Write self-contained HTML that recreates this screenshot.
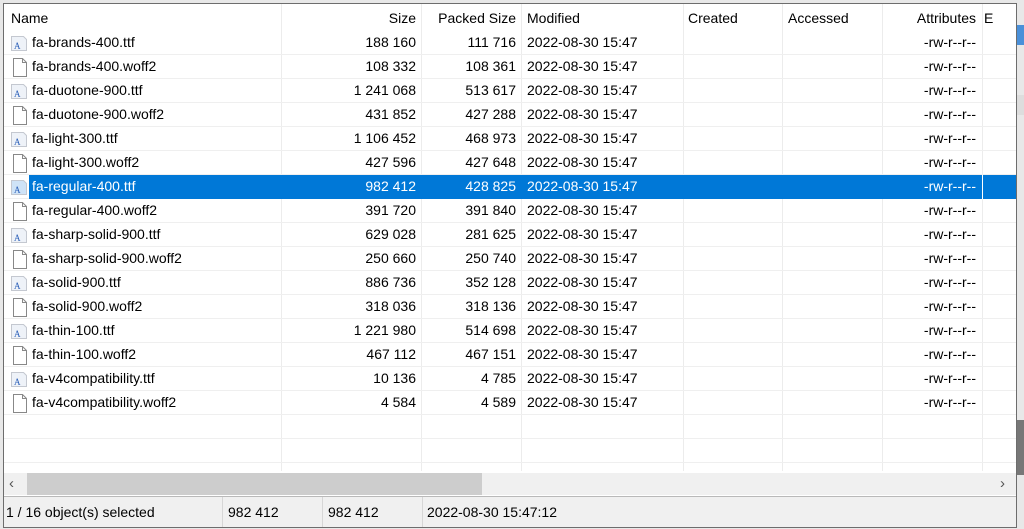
<!DOCTYPE html><html><head><style>
*{margin:0;padding:0;box-sizing:border-box}
body{width:1024px;height:529px;overflow:hidden;background:#e8e8e8;font-family:"Liberation Sans",sans-serif;font-size:14px;color:#000;position:relative}
.win{position:absolute;left:3px;top:3px;width:1014px;height:525px;background:#fff;border:1px solid #6d6d6d}
.a{position:absolute;white-space:nowrap}
.hdr{position:absolute;left:0;top:0;width:1012px;height:27px;background:#fff}
.vl{position:absolute;width:1px;background:#ececec}
.row{position:absolute;left:0;width:1012px;height:24px;border-bottom:1px solid #efefef}
.c{position:absolute;top:3px;white-space:nowrap}
.r{text-align:right}
.sel{background:#0078d7;color:#fff}
</style></head><body>
<div style="position:absolute;left:1017px;top:25px;width:7px;height:20px;background:#4a90d9"></div>
<div style="position:absolute;left:1017px;top:95px;width:7px;height:20px;background:#ddd"></div>
<div style="position:absolute;left:1017px;top:420px;width:7px;height:55px;background:#777"></div>
<div class="win">
<div class="hdr">
<div class="a" style="left:7px;top:6px">Name</div>
<div class="a" style="left:278px;top:6px;width:134px;text-align:right">Size</div>
<div class="a" style="left:418px;top:6px;width:94px;text-align:right">Packed Size</div>
<div class="a" style="left:523px;top:6px">Modified</div>
<div class="a" style="left:684px;top:6px">Created</div>
<div class="a" style="left:784px;top:6px">Accessed</div>
<div class="a" style="left:880px;top:6px;width:92px;text-align:right">Attributes</div>
<div class="a" style="left:980px;top:6px">E</div>
</div>
<div class="vl" style="left:277px;top:0;height:467px"></div>
<div class="vl" style="left:417px;top:0;height:467px"></div>
<div class="vl" style="left:517px;top:0;height:467px"></div>
<div class="vl" style="left:679px;top:0;height:467px"></div>
<div class="vl" style="left:778px;top:0;height:467px"></div>
<div class="vl" style="left:878px;top:0;height:467px"></div>
<div class="vl" style="left:978px;top:0;height:467px"></div>
<div id="rows"></div>
<div style="position:absolute;left:0;top:469px;width:1012px;height:22px;background:#f0f0f0"></div>
<div style="position:absolute;left:23px;top:469px;width:455px;height:22px;background:#cdcdcd"></div>
<div class="a" style="left:5px;top:471px;color:#555;font-size:15px">&lsaquo;</div>
<div class="a" style="left:996px;top:471px;color:#555;font-size:15px">&rsaquo;</div>
<div style="position:absolute;left:0;top:492px;width:1012px;height:31px;background:#f0f0f0;border-top:1px solid #b9b9b9"></div>
<div class="vl" style="left:218px;top:493px;height:30px;background:#d6d6d6"></div>
<div class="vl" style="left:318px;top:493px;height:30px;background:#d6d6d6"></div>
<div class="vl" style="left:418px;top:493px;height:30px;background:#d6d6d6"></div>
<div class="a" style="left:2px;top:500px">1 / 16 object(s) selected</div>
<div class="a" style="left:224px;top:500px">982 412</div>
<div class="a" style="left:324px;top:500px">982 412</div>
<div class="a" style="left:423px;top:500px">2022-08-30 15:47:12</div>
</div>
<script>
var d=[["fa-brands-400.ttf","188 160","111 716"],["fa-brands-400.woff2","108 332","108 361"],["fa-duotone-900.ttf","1 241 068","513 617"],["fa-duotone-900.woff2","431 852","427 288"],["fa-light-300.ttf","1 106 452","468 973"],["fa-light-300.woff2","427 596","427 648"],["fa-regular-400.ttf","982 412","428 825"],["fa-regular-400.woff2","391 720","391 840"],["fa-sharp-solid-900.ttf","629 028","281 625"],["fa-sharp-solid-900.woff2","250 660","250 740"],["fa-solid-900.ttf","886 736","352 128"],["fa-solid-900.woff2","318 036","318 136"],["fa-thin-100.ttf","1 221 980","514 698"],["fa-thin-100.woff2","467 112","467 151"],["fa-v4compatibility.ttf","10 136","4 785"],["fa-v4compatibility.woff2","4 584","4 589"]];
var h="";
for(var i=0;i<18;i++){var t=27+i*24;
if(i>=16){h+='<div class="row" style="top:'+t+'px"></div>';continue;}
var r=d[i],s=i==6,ttf=r[0].slice(-3)=="ttf";
var ic=ttf?'<svg width="18" height="17" style="position:absolute;left:6px;top:4px"><path d="M1.5 1.5h12l3 3v11h-15z" fill="'+(s?'#cfe3f7':'#eef2f8')+'" stroke="#c4c8d0"/><text x="4" y="14" font-size="9" fill="#2b5fb8" font-family="Liberation Serif">A</text></svg>'
:'<svg width="16" height="19" style="position:absolute;left:8px;top:3px"><path d="M1.5 .5h9l4 4v14h-13z" fill="#fff" stroke="#888"/><path d="M10.5 .5v4h4" fill="none" stroke="#888"/></svg>';
h+='<div class="row" style="top:'+t+'px">'+(s?'<div class="sel" style="position:absolute;left:25px;top:0;width:987px;height:24px"></div><div style="position:absolute;left:978px;top:0;width:1px;height:24px;background:#fff"></div>':'')+ic+
'<div class="c" style="left:28px;'+(s?'color:#fff':'')+'">'+r[0]+'</div>'+
'<div class="c r" style="left:278px;width:134px;'+(s?'color:#fff':'')+'">'+r[1]+'</div>'+
'<div class="c r" style="left:418px;width:94px;'+(s?'color:#fff':'')+'">'+r[2]+'</div>'+
'<div class="c" style="left:523px;'+(s?'color:#fff':'')+'">2022-08-30 15:47</div>'+
'<div class="c r" style="left:880px;width:92px;'+(s?'color:#fff':'')+'">-rw-r--r--</div></div>';}
document.getElementById("rows").innerHTML=h;
</script>
</body></html>
